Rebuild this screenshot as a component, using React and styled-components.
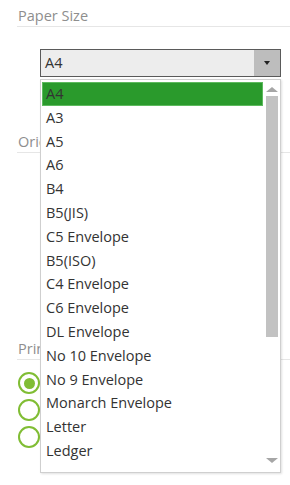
import styled, { createGlobalStyle } from 'styled-components';

const sizes = [
  'A4', 'A3', 'A5', 'A6', 'B4', 'B5(JIS)', 'C5 Envelope', 'B5(ISO)',
  'C4 Envelope', 'C6 Envelope', 'DL Envelope', 'No 10 Envelope',
  'No 9 Envelope', 'Monarch Envelope', 'Letter', 'Ledger',
];

export default function App() {
  return (
    <>
      <GlobalStyle />
      <Page>
        <SectionTitle>Paper Size</SectionTitle>
        <SelectWrap>
          <SelectBox>
            <SelectValue>A4</SelectValue>
            <ArrowBtn>
              <Caret />
            </ArrowBtn>
          </SelectBox>
          <Dropdown>
            <Options>
              {sizes.map((s) => (
                <Option key={s} selected={s === 'A4'}>{s}</Option>
              ))}
            </Options>
            <Scrollbar>
              <ScrollArrow up />
              <Thumb />
              <ScrollArrow />
            </Scrollbar>
          </Dropdown>
        </SelectWrap>

        <SectionTitle $gap>Orientation</SectionTitle>
        <OrientationBody />

        <SectionTitle>Print Quality</SectionTitle>
        <RadioList>
          <Radio checked />
          <Radio />
          <Radio />
        </RadioList>
      </Page>
    </>
  );
}

const GlobalStyle = createGlobalStyle`
  body {
    margin: 0;
    background: #fff;
    font-family: 'Open Sans', 'Liberation Sans', sans-serif;
  }
`;

const Page = styled.div`
  padding-left: 17px;
  width: 273px;
  min-height: 485px;
`;

const SectionTitle = styled.div`
  margin-top: ${(p) => (p.$gap ? '49px' : '0')};
  padding: 6px 0 1px 1px;
  font-size: 14.5px;
  line-height: 19px;
  color: #8e8e8e;
  white-space: nowrap;
  border-bottom: 1px solid #e6e6e6;
`;

const SelectWrap = styled.div`
  position: relative;
  margin: 22px 0 0 23px;
  width: 241px;
`;

const SelectBox = styled.div`
  display: flex;
  height: 26px;
  border: 1px solid #5a5a5a;
  background: #ededed;
`;

const SelectValue = styled.div`
  flex: 1;
  padding-left: 4px;
  font-size: 14.5px;
  line-height: 26px;
  color: #333;
`;

const ArrowBtn = styled.div`
  width: 26px;
  display: flex;
  align-items: center;
  justify-content: center;
  background: #bdbdbd;
`;

const Caret = styled.div`
  width: 0;
  height: 0;
  border-left: 3px solid transparent;
  border-right: 3px solid transparent;
  border-top: 4px solid #222;
`;

const Dropdown = styled.div`
  position: absolute;
  top: 30px;
  left: 0;
  width: 241px;
  height: 394px;
  box-sizing: border-box;
  display: flex;
  gap: 2px;
  padding: 1px;
  background: #fff;
  border: 1px solid #cfcfcf;
  box-shadow: 1px 1px 2px rgba(0, 0, 0, 0.12);
`;

const Options = styled.div`
  width: 221px;
  padding-top: 1px;
  overflow: hidden;
`;

const Option = styled.div`
  height: 23.8px;
  box-sizing: border-box;
  padding-left: 3px;
  font-size: 14.5px;
  line-height: 21px;
  color: #333;
  white-space: nowrap;
  background: ${(p) => (p.selected ? '#2a9a2c' : 'transparent')};
  border: 1px solid ${(p) => (p.selected ? '#5dba5e' : 'transparent')};
`;

const Scrollbar = styled.div`
  width: 13px;
  display: flex;
  flex-direction: column;
  align-items: center;
  padding: 6px 0 8px;
`;

const ScrollArrow = styled.div`
  width: 0;
  height: 0;
  border-left: 6px solid transparent;
  border-right: 6px solid transparent;
  ${(p) => (p.up ? 'border-bottom: 5px solid #a6a6a6;' : 'border-top: 5px solid #a6a6a6;')}
  ${(p) => (p.up ? 'margin-bottom: 4px;' : 'margin-top: auto;')}
`;

const Thumb = styled.div`
  width: 12px;
  height: 241px;
  background: #c2c2c2;
`;

const OrientationBody = styled.div`
  height: 180px;
`;

const RadioList = styled.div`
  display: flex;
  flex-direction: column;
  gap: 5px;
  padding: 12px 0 0 1px;
`;

const Radio = styled.div`
  width: 22px;
  height: 22px;
  box-sizing: border-box;
  border-radius: 50%;
  border: 2px solid #80bd34;
  display: flex;
  align-items: center;
  justify-content: center;

  &::after {
    content: '';
    display: ${(p) => (p.checked ? 'block' : 'none')};
    width: 11px;
    height: 11px;
    border-radius: 50%;
    background: #80bd34;
  }
`;
